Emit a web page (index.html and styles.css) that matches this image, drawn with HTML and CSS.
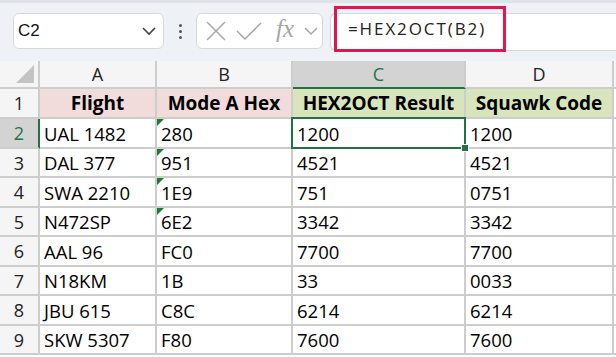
FILE: index.html
```html
<!DOCTYPE html>
<html lang="en">
<head>
    <meta charset="UTF-8">
    <title>HEX2OCT</title>
    <link rel="stylesheet" href="styles.css">
</head>
<body>
    <!-- Formula bar -->
    <div class="toolbar">
        <div class="name-box">
            <span>C2</span>
            <svg class="chev" width="16" height="10" viewBox="0 0 16 10"><path d="M2 2 L8 8 L14 2" fill="none" stroke="#444" stroke-width="1.6"/></svg>
        </div>
        <div class="dots"><i></i><i></i><i></i></div>
        <div class="fx-buttons">
            <svg width="24" height="20" viewBox="0 0 24 20"><path d="M3 1 L21 19 M21 1 L3 19" stroke="#a6a6a6" stroke-width="1.5" fill="none"/></svg>
            <svg width="28" height="20" viewBox="0 0 28 20"><path d="M2 10 L10 18 L26 2" stroke="#a6a6a6" stroke-width="1.5" fill="none"/></svg>
            <span class="fx">fx</span>
            <svg class="fx-chev" width="16" height="10" viewBox="0 0 16 10"><path d="M2 2 L8 8 L14 2" fill="none" stroke="#a6a6a6" stroke-width="1.5"/></svg>
        </div>
        <div class="formula">
            <div class="formula-text">=HEX2OCT(B2)</div>
        </div>
    </div>

    <!-- Sheet grid -->
    <div class="sheet">
        <div class="hd corner"><span class="tri"></span></div>
        <div class="hd">A</div>
        <div class="hd">B</div>
        <div class="hd sel-col">C</div>
        <div class="hd">D</div>
        <div class="hd edge"></div>

        <div class="rn">1</div>
        <div class="cell th pink">Flight</div>
        <div class="cell th pink">Mode A Hex</div>
        <div class="cell th green">HEX2OCT Result</div>
        <div class="cell th green">Squawk Code</div>
        <div class="cell edge"></div>

        <div class="rn sel-row">2</div>
        <div class="cell">UAL 1482</div>
        <div class="cell note">280</div>
        <div class="cell active">1200<span class="handle"></span></div>
        <div class="cell">1200</div>
        <div class="cell edge"></div>

        <div class="rn">3</div>
        <div class="cell">DAL 377</div>
        <div class="cell note">951</div>
        <div class="cell">4521</div>
        <div class="cell">4521</div>
        <div class="cell edge"></div>

        <div class="rn">4</div>
        <div class="cell">SWA 2210</div>
        <div class="cell note">1E9</div>
        <div class="cell">751</div>
        <div class="cell">0751</div>
        <div class="cell edge"></div>

        <div class="rn">5</div>
        <div class="cell">N472SP</div>
        <div class="cell note">6E2</div>
        <div class="cell">3342</div>
        <div class="cell">3342</div>
        <div class="cell edge"></div>

        <div class="rn">6</div>
        <div class="cell">AAL 96</div>
        <div class="cell">FC0</div>
        <div class="cell">7700</div>
        <div class="cell">7700</div>
        <div class="cell edge"></div>

        <div class="rn">7</div>
        <div class="cell">N18KM</div>
        <div class="cell">1B</div>
        <div class="cell">33</div>
        <div class="cell">0033</div>
        <div class="cell edge"></div>

        <div class="rn">8</div>
        <div class="cell">JBU 615</div>
        <div class="cell">C8C</div>
        <div class="cell">6214</div>
        <div class="cell">6214</div>
        <div class="cell edge"></div>

        <div class="rn">9</div>
        <div class="cell">SKW 5307</div>
        <div class="cell">F80</div>
        <div class="cell">7600</div>
        <div class="cell">7600</div>
        <div class="cell edge"></div>
    </div>
</body>
</html>
```

FILE: styles.css
```css
/* General */
body {
    margin: 0;
    width: 616px;
    height: 357px;
    overflow: hidden;
    background: #fff;
    font-family: 'Open Sans', 'Liberation Sans', sans-serif;
    color: #000;
}

/* Formula bar */
.toolbar {
    height: 61px;
    background: #eef1f5;
    border-top: 3px solid #dfe3e8;
    display: flex;
    align-items: flex-start;
    padding: 10px 0 0 13px;
    box-sizing: border-box;
    position: relative;
}

.name-box {
    width: 151px;
    height: 36px;
    box-sizing: border-box;
    background: #fff;
    border: 1px solid #d5d8dc;
    border-radius: 6px;
    display: flex;
    align-items: center;
    justify-content: space-between;
    padding: 0 6px 0 4px;
    font-family: 'Liberation Sans', sans-serif;
    font-size: 17px;
    color: #111;
}

.dots {
    width: 32px;
    height: 36px;
    display: flex;
    flex-direction: column;
    align-items: center;
    justify-content: center;
    gap: 3px;
}

.dots i {
    width: 3px;
    height: 3px;
    background: #555;
    border-radius: 50%;
}

.fx-buttons {
    width: 127px;
    height: 36px;
    box-sizing: border-box;
    background: #fff;
    border: 1px solid #d5d8dc;
    border-radius: 6px;
    display: flex;
    align-items: center;
    padding-left: 7px;
    gap: 7px;
}

.fx {
    font-family: 'Liberation Serif', serif;
    font-style: italic;
    font-size: 25px;
    color: #a6a6a6;
    margin: 0 0 4px 6px;
}

.fx-chev {
    margin-left: 2px;
}

.formula {
    flex: 1;
    height: 36px;
    margin-left: 7px;
    background: #fff;
    border: 1px solid #d5d8dc;
    border-right: none;
    border-radius: 6px 0 0 6px;
    position: relative;
}

.formula-text {
    position: absolute;
    left: 3px;
    top: -8px;
    width: 172px;
    height: 46px;
    box-sizing: border-box;
    border: 3px solid #e0174c;
    padding: 8px 0 0 11px;
    font-size: 17px;
    letter-spacing: 1.9px;
    color: #222;
}

/* Sheet grid */
.sheet {
    display: grid;
    grid-template-columns: 40px 117px 136px 173px 148px 2px;
    grid-template-rows: 28px 30px 30px 29px 30px 29px 30px 29px 30px 29px;
    font-size: 18.5px;
}

.hd {
    background: #f5f5f5;
    border-right: 2px solid #cdcdcd;
    border-bottom: 2px solid #cdcdcd;
    display: flex;
    align-items: center;
    justify-content: center;
    color: #222;
    font-size: 18px;
    box-sizing: border-box;
}

.corner {
    position: relative;
}

.tri {
    position: absolute;
    right: 4px;
    bottom: 4px;
    width: 0;
    height: 0;
    border-left: 18px solid transparent;
    border-bottom: 18px solid #c4c4c4;
}

.sel-col {
    background: #d3d3d3;
    color: #217346;
    border-bottom: 2px solid #217346;
}

.rn {
    background: #f5f5f5;
    border-right: 2px solid #cdcdcd;
    border-bottom: 2px solid #cdcdcd;
    display: flex;
    align-items: center;
    justify-content: center;
    color: #222;
    font-size: 18px;
    box-sizing: border-box;
}

.sel-row {
    background: #d3d3d3;
    color: #217346;
    border-right: 2px solid #217346;
}

.cell {
    border-right: 2px solid #cdcdcd;
    border-bottom: 2px solid #cdcdcd;
    display: flex;
    align-items: center;
    padding-left: 4px;
    box-sizing: border-box;
    position: relative;
    white-space: nowrap;
}

.edge {
    padding: 0;
    background: #fff;
    border-right: none;
}

.hd.edge {
    background: #f5f5f5;
}

.th {
    font-weight: 700;
    font-size: 19px;
    justify-content: center;
    padding-left: 0;
}

.pink {
    background: #f2dcdb;
}

.green {
    background: #d8e4bc;
}

/* Green error triangles */
.note::before {
    content: "";
    position: absolute;
    left: 0;
    top: 0;
    border-top: 7px solid #1e7b34;
    border-right: 7px solid transparent;
}

/* Active cell */
.active::after {
    content: "";
    position: absolute;
    left: -2px;
    top: -2px;
    right: -2px;
    bottom: -2px;
    border: 2px solid #217346;
}

.handle {
    position: absolute;
    right: -5px;
    bottom: -5px;
    width: 6px;
    height: 6px;
    background: #217346;
    border: 1px solid #fff;
    z-index: 2;
}
```
